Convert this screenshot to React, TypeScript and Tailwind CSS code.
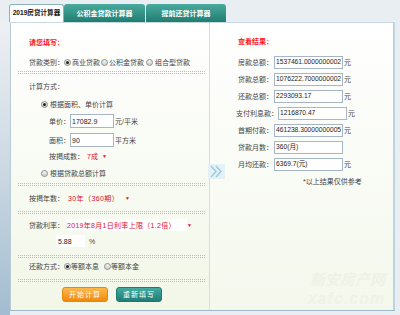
import React from "react";

const F = { fontFamily: '"Liberation Sans", "Noto Sans CJK SC", sans-serif' };

const Radio = ({ checked }: { checked?: boolean }) => (
  <span className="inline-flex w-[7px] h-[7px] rounded-full border border-[#8c8c8c] bg-gradient-to-b from-[#f6f6f6] to-[#cfcfcf] items-center justify-center shrink-0">
    {checked && <span className="w-[3px] h-[3px] rounded-full bg-[#222]" />}
  </span>
);

const Dots = ({ className }: { className: string }) => (
  <div className={"ml-[7px] mr-[4px] h-[3px] border-y border-dotted border-[#94ccc7] " + className} />
);

const Tri = () => <span className="text-[#e0102a] text-[5px] leading-none">▼</span>;

const Inp = ({ v, w }: { v: string; w: string }) => (
  <span className={"inline-flex shrink-0 items-center h-[14px] bg-white border border-[#a7b6c6] px-[1px] text-[7px] text-[#222] " + w}>{v}</span>
);

const RRow = ({ label, value, unit, lw, pl, mt }: { label: string; value: string; unit?: string; lw: string; pl: string; mt: string }) => (
  <div className={"flex items-center h-[14px] " + pl + " " + mt}>
    <span className={"shrink-0 " + lw}>{label}</span>
    <span className="inline-flex shrink-0 items-center h-[13px] w-[69px] bg-white border border-[#a7b6c6] pl-[1px] text-[6.7px] text-[#222] overflow-hidden">{value}</span>
    {unit && <span className="ml-[1px]">{unit}</span>}
  </div>
);

export default function App() {
  return (
    <div style={F} className="w-[400px] h-[315px] bg-[#e9eef2] flex flex-col overflow-hidden text-[7px] text-[#444] leading-none whitespace-nowrap">
      {/* tabs */}
      <div className="h-[22px] pt-[4px] pl-[9px] flex items-end shrink-0">
        <div className="w-[55px] h-[18px] bg-white border border-b-0 border-[#8fb2b6] rounded-t-[3px] flex items-center justify-center font-bold text-[#111] text-[6.6px]">
          2019房贷计算器
        </div>
        <div className="w-[81px] h-[18px] bg-gradient-to-b from-[#4aaa9e] to-[#1e7d72] rounded-t-[3px] flex items-center justify-center font-bold text-white text-[7px]">
          公积金贷款计算器
        </div>
        <div className="ml-[1px] w-[80px] h-[18px] bg-gradient-to-b from-[#4aaa9e] to-[#1e7d72] rounded-t-[3px] flex items-center justify-center font-bold text-white text-[7px]">
          提前还贷计算器
        </div>
      </div>
      {/* body */}
      <div className="flex flex-1">
        <div className="w-[10px] bg-gradient-to-b from-[#edf0f3] via-[#cbd9e3] to-[#a3bcd0]" />
        <div className="flex flex-col">
          <div className="w-[385px] h-[289px] flex border-t border-[#c9d9e2] border-b border-b-[#9dbad0] relative">
            {/* left panel */}
            <div className="w-[199px] bg-gradient-to-b from-[#ffffff] to-[#f2f7e8] flex flex-col border-l border-[#b9ccd6]">
              <div className="h-[14px] mt-[12px] pl-[18px] flex items-center text-[#ff1a1a] font-bold">请您填写：</div>
              <div className="h-[14px] mt-[6px] pl-[18px] flex items-center">
                <span className="w-[35px] shrink-0">贷款类别：</span>
                <Radio checked />
                <span className="ml-[1px] w-[29px] shrink-0">商业贷款</span>
                <Radio />
                <span className="ml-[1px] w-[37px] shrink-0">公积金贷款</span>
                <Radio />
                <span className="ml-[2px]">组合型贷款</span>
              </div>
              <Dots className="mt-[2px]" />
              <div className="h-[14px] mt-[5px] pl-[18px] flex items-center">计算方式：</div>
              <div className="h-[14px] mt-[4px] pl-[30px] flex items-center">
                <Radio checked />
                <span className="ml-[2px]">根据面积、单价计算</span>
              </div>
              <div className="h-[14px] mt-[3px] pl-[38px] flex items-center">
                <span className="w-[21px] shrink-0">单价：</span>
                <Inp v="17082.9" w="w-[44px]" />
                <span className="ml-[1px]">元/平米</span>
              </div>
              <div className="h-[14px] mt-[5px] pl-[38px] flex items-center">
                <span className="w-[21px] shrink-0">面积：</span>
                <Inp v="90" w="w-[44px]" />
                <span className="ml-[1px]">平方米</span>
              </div>
              <div className="h-[14px] mt-[2px] pl-[38px] flex items-center">
                <span className="w-[38px] shrink-0">按揭成数：</span>
                <span className="text-[#e0102a] w-[15px] shrink-0">7成</span>
                <Tri />
              </div>
              <div className="h-[14px] mt-[3px] pl-[30px] flex items-center">
                <Radio />
                <span className="ml-[2px]">根据贷款总额计算</span>
              </div>
              <Dots className="mt-[3px]" />
              <div className="h-[14px] mt-[5px] pl-[18px] flex items-center">
                <span className="w-[39px] shrink-0">按揭年数：</span>
                <span className="text-[#e0102a] tracking-[0.4px] w-[57px] shrink-0">30年（360期）</span>
                <Tri />
              </div>
              <Dots className="mt-[6px]" />
              <div className="h-[14px] mt-[4px] pl-[18px] flex items-center">
                <span className="w-[38px] shrink-0">贷款利率：</span>
                <span className="text-[#e0102a] bg-white tracking-[0.3px] w-[120px] shrink-0 h-[12px] flex items-center">2019年8月1日利率上限（1.2倍）</span>
                <Tri />
              </div>
              <div className="h-[14px] mt-[2px] pl-[45px] flex items-center">
                <span className="w-[29px] h-[12px] bg-white flex items-center pl-[2px] text-[#222]">5.88</span>
                <span className="ml-[4px]">%</span>
              </div>
              <Dots className="mt-[7px]" />
              <div className="h-[14px] mt-[1px] pl-[18px] flex items-center">
                <span className="w-[35px] shrink-0">还款方式：</span>
                <Radio checked />
                <span className="w-[33px] shrink-0">等额本息</span>
                <Radio />
                <span>等额本金</span>
              </div>
              <Dots className="mt-[6px]" />
              <div className="mt-[5px] pl-[51px] flex gap-[8px]">
                <div className="w-[46px] h-[15px] rounded-[3px] bg-gradient-to-b from-[#fdb84a] to-[#ef8a00] border border-[#e08a10] flex items-center justify-center text-white text-[7px] tracking-[1px]">开始计算</div>
                <div className="w-[46px] h-[15px] rounded-[3px] bg-gradient-to-b from-[#44aaa0] to-[#1f7e75] border border-[#1d7a70] flex items-center justify-center text-white text-[7px] tracking-[1px]">重新填写</div>
              </div>
            </div>
            {/* divider */}
            <div className="w-[1px] bg-[#d3e6c4]" />
            {/* right panel */}
            <div className="flex-1 bg-gradient-to-b from-[#ffffff] to-[#f4f8ec] flex flex-col border-r-2 border-[#bcd3e2] relative overflow-hidden">
              <div className="h-[14px] mt-[11px] pl-[28px] flex items-center text-[#ff1a1a] font-bold">查看结果：</div>
              <RRow label="房款总额：" value="1537461.0000000002" unit="元" lw="w-[36px]" pl="pl-[28px]" mt="mt-[7px]" />
              <RRow label="贷款总额：" value="1076222.7000000002" unit="元" lw="w-[36px]" pl="pl-[28px]" mt="mt-[3px]" />
              <RRow label="还款总额：" value="2293093.17" unit="元" lw="w-[36px]" pl="pl-[28px]" mt="mt-[3px]" />
              <RRow label="支付利息款：" value="1216870.47" unit="元" lw="w-[42px]" pl="pl-[26px]" mt="mt-[3px]" />
              <RRow label="首期付款：" value="461238.30000000005" unit="元" lw="w-[36px]" pl="pl-[28px]" mt="mt-[3px]" />
              <RRow label="贷款月数：" value="360(月)" lw="w-[36px]" pl="pl-[28px]" mt="mt-[3px]" />
              <RRow label="月均还款：" value="6369.7(元)" unit="元" lw="w-[36px]" pl="pl-[28px]" mt="mt-[3px]" />
              <div className="h-[14px] mt-[3px] pl-[93px] flex items-center">*以上结果仅供参考</div>
              <div className="absolute right-[8px] bottom-[3px] flex flex-col items-end gap-[5px] text-[#eef3e6] italic font-bold">
                <span className="text-[15px] leading-[15px]" style={{ fontFamily: '"Noto Sans CJK SC", sans-serif' }}>新安房产网</span>
                <span className="text-[16px] leading-[16px] tracking-[1px]">xafc.com</span>
              </div>
            </div>
            {/* chevron */}
            <div className="absolute left-[198px] top-[141px] w-[17px] h-[15px] bg-[#e4f2f8] flex items-center justify-center">
              <svg width="15" height="13" viewBox="0 0 15 13" fill="none" stroke="#9cc9dd" strokeWidth="1.4">
                <path d="M2 1 L7 6.5 L2 12" />
                <path d="M7 1 L12 6.5 L7 12" />
              </svg>
            </div>
          </div>
        </div>
      </div>
    </div>
  );
}
